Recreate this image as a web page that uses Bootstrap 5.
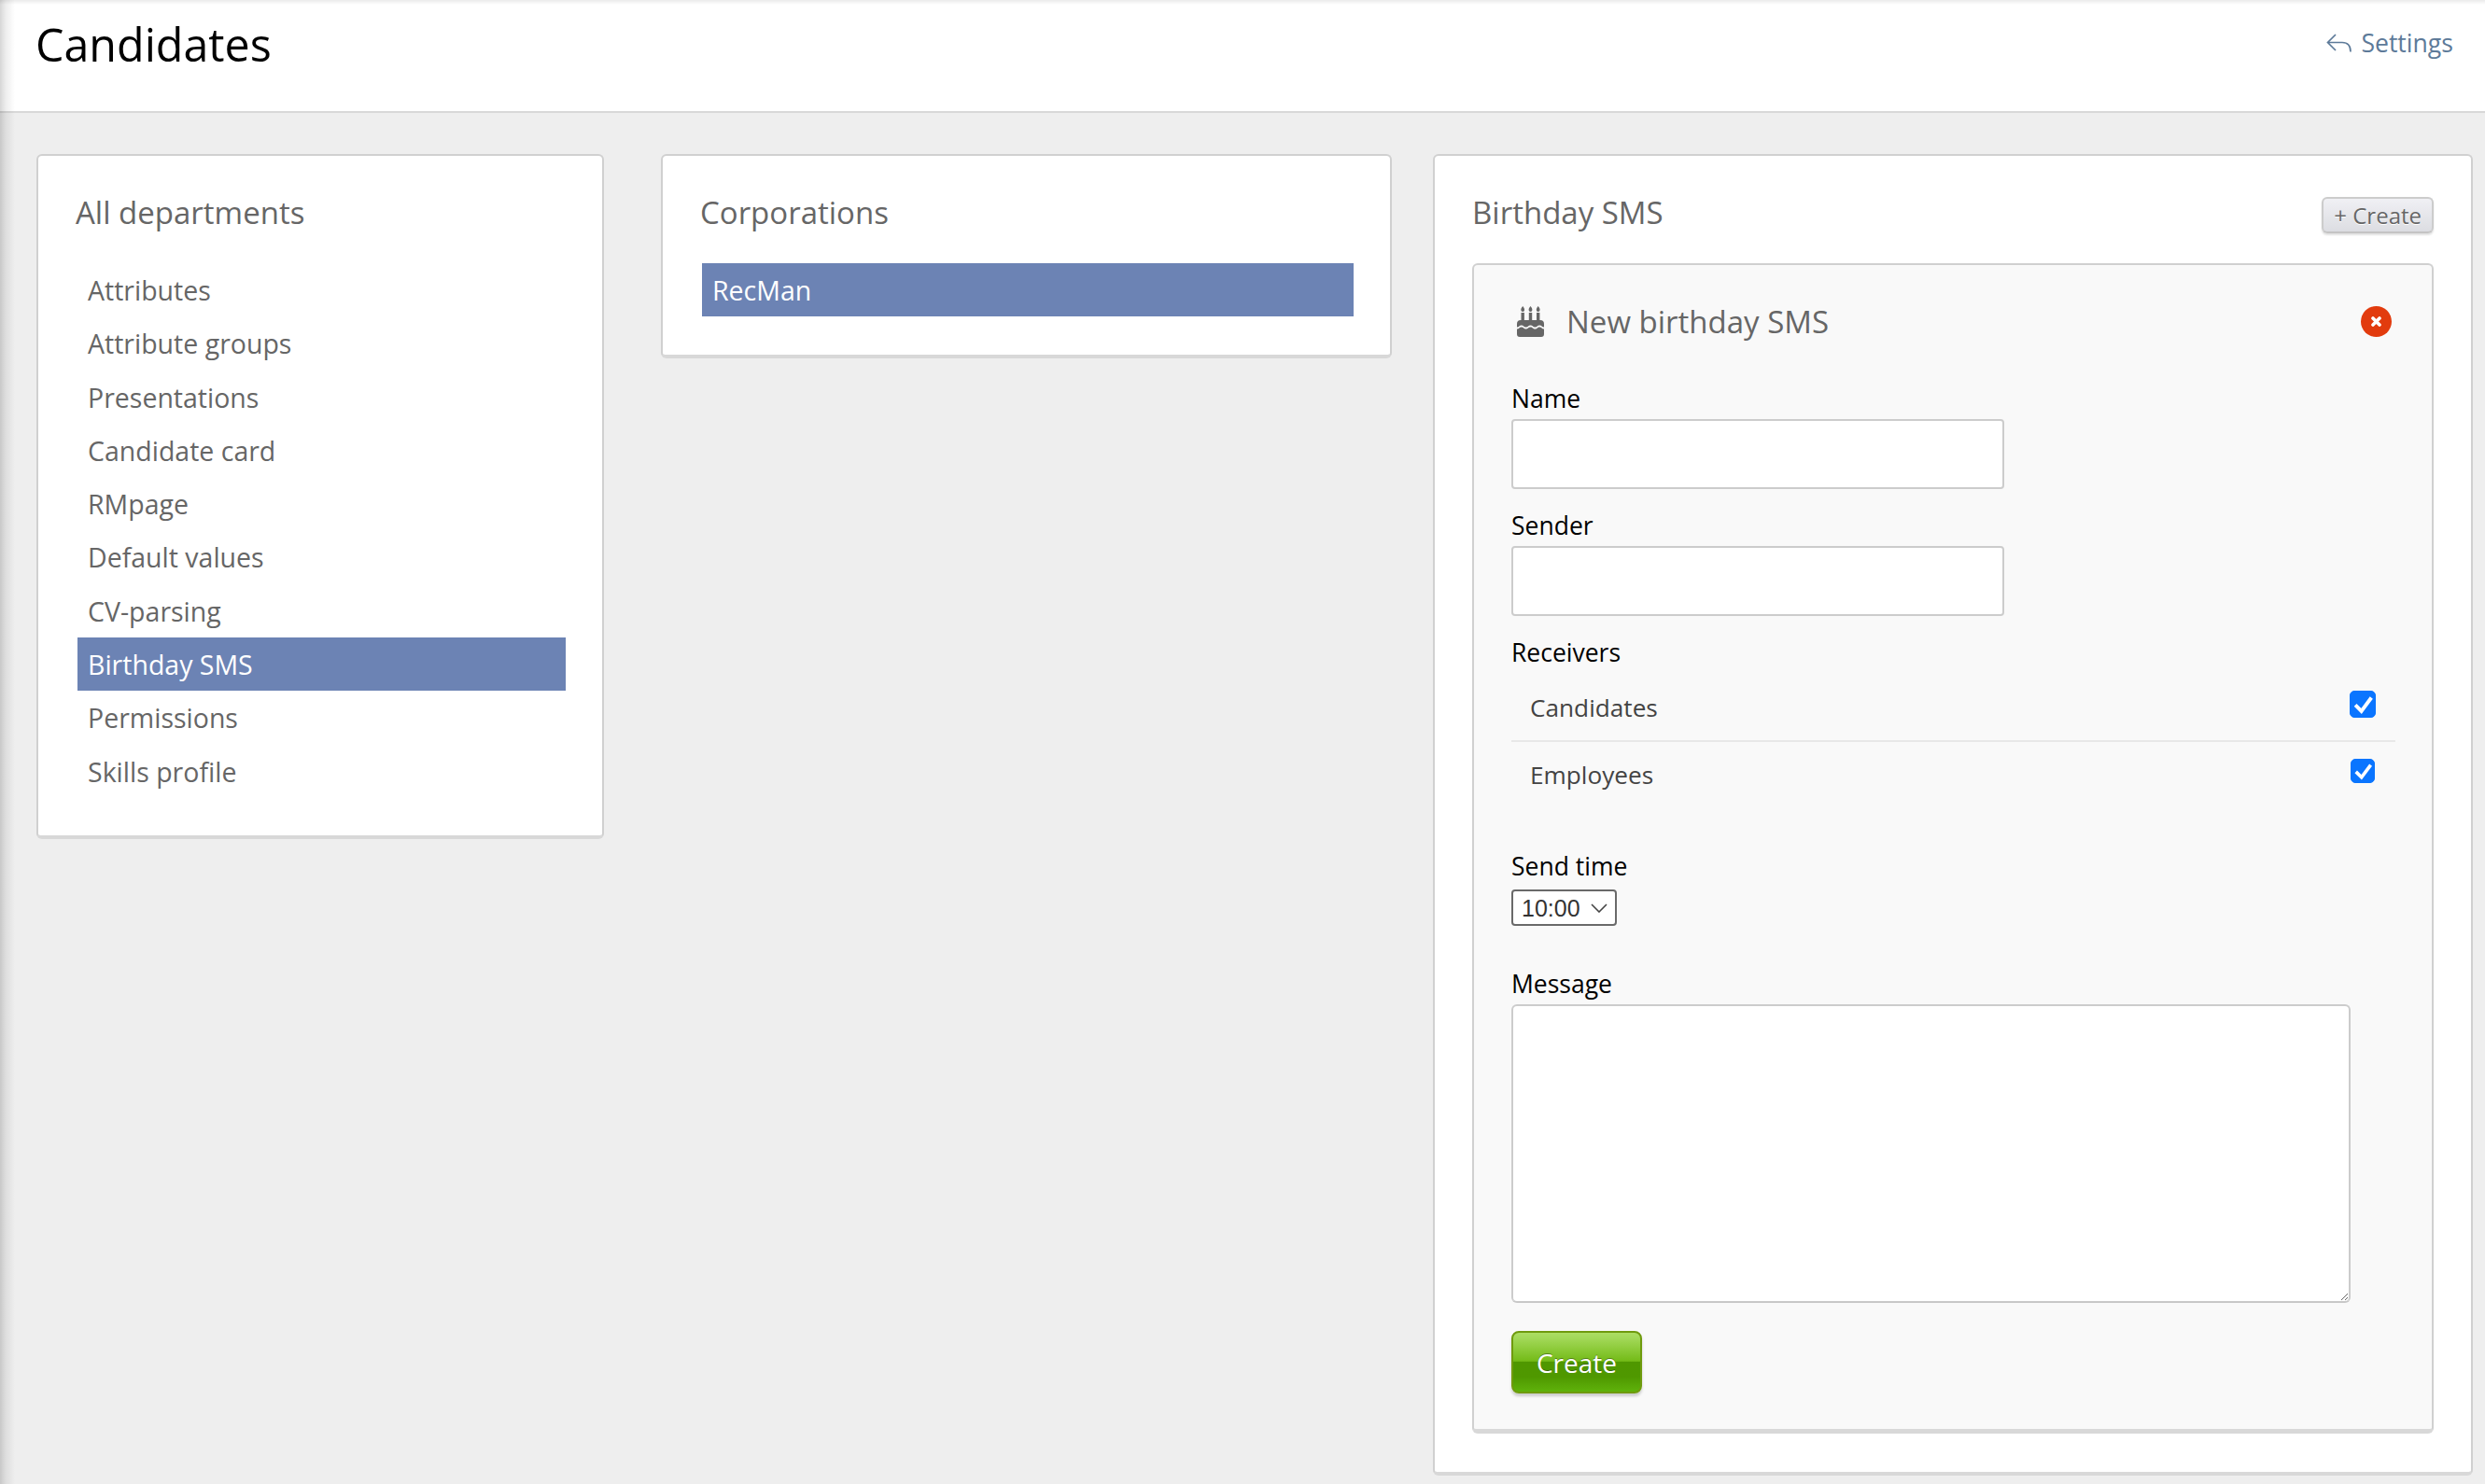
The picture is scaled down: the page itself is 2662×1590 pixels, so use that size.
<!DOCTYPE html>
<html lang="en">
<head>
<meta charset="utf-8">
<title>Candidates</title>
<link href="https://cdn.jsdelivr.net/npm/bootstrap@5.3.0/dist/css/bootstrap.min.css" rel="stylesheet">
<style>
html,body{height:100%}
body{font-family:"Open Sans","Noto Sans",sans-serif;font-size:28.5px;line-height:38px;color:#666;background:#eee;overflow:hidden}
.page-wrap{position:relative;height:1590px;background:#eee}
.page-wrap::before{content:"";position:absolute;inset:0;pointer-events:none;z-index:5;
 background:linear-gradient(to right,rgba(0,0,0,.16),rgba(0,0,0,.07) 6px,rgba(0,0,0,0) 16px),linear-gradient(to bottom,rgba(0,0,0,.08),rgba(0,0,0,0) 5px)}
.top-head{height:121px;background:#fff;border-bottom:2px solid #d8d8d8;padding:0 34px 0 38px}
.top-title{font-size:48.4px;line-height:66px;font-weight:400;color:#000;margin:14px 0 0}
.back-link{color:#5d7a99;text-decoration:none;font-size:26.6px;line-height:38px;margin-top:27px}
.back-link svg{width:27px;height:20px;margin-right:10px;margin-top:9px}
.cols{padding:44px 13px 0 39px}
.pane{background:#fff;border:2px solid #d0d0d0;border-bottom:4px solid #d8d8d8;border-radius:6px;padding:0;flex:none;color:#666}
.pane-a{width:608px;height:734px;margin-right:61px}
.pane-b{width:783px;height:219px;margin-right:44px}
.pane-c{width:1114px;height:1416px}
.pane-inner{padding:0 40px}
.pane-title{font-size:33px;line-height:46px;font-weight:400;margin:38px 0 0;color:#666}
.menu-list{list-style:none;margin:31px -1px 0 2px;padding:0}
.menu-list li{height:57.3px;line-height:58px;padding-left:11px;color:#666}
.menu-list li.on{background:#6c83b4;color:#fff}
.btn-small{background:linear-gradient(#f0f0f4,#dcdde2);border:2px solid #ccc;border-bottom-color:#c4c4c4;border-radius:6px;color:#666;font-size:24px;line-height:30px;padding:2px 11px 2px;height:39px;box-shadow:0 2px 2px rgba(0,0,0,.12);text-shadow:0 1px 0 #fff;margin-top:44px}
.sub-panel{background:#f9f9f9;border:2px solid #d0d0d0;border-bottom:5px solid #d8d8d8;border-radius:6px;height:1254px;margin:31px 0 0;padding:33px 41px 0 40px}
.sub-head{height:56px;margin-bottom:35px}
.sub-title{font-size:33px;line-height:56px;font-weight:400;color:#666;margin:0}
.cake{width:29px;height:33px;margin:-1px 24px 0 6px;fill:#666;flex:none}
.close-dot{width:33px;height:33px;margin-right:2px;margin-top:-1px}
.fld-label{color:#000;font-size:26.5px;line-height:38px;margin:0 0 3px;display:block}
.fld-input.form-control{width:528px;height:75px;border:2px solid #ccc;border-radius:4px;background:#fff;box-shadow:none;padding:0 12px;margin-bottom:20px}
.recv-label{margin-bottom:4px}
.recv-row{border-bottom:2px solid #e8e8e8;height:73px;width:947px;padding:15px 21px 0 20px;color:#444;font-size:26.2px}
.recv-row.last{border-bottom:0;height:72px;padding-top:14px}
.recv-row .form-check-input{width:28px;height:29px;margin:3px 0 0;background-color:#0a75ff;border-color:#0a75ff;border-radius:5px;flex:none;background-size:100% 100%;
 background-image:url("data:image/svg+xml,%3Csvg xmlns='http://www.w3.org/2000/svg' viewBox='0 0 28 28'%3E%3Cpath d='M5.5 15l7 7L24 6.5' fill='none' stroke='%23fff' stroke-width='4.2'/%3E%3C/svg%3E")}
.recv-row.last .form-check-input{width:26px;height:26px;margin:4px 1px 0 0}
.recv-row span{margin-top:2px}
.send-label{margin:42px 0 6px}
.time-select.form-select{width:113px;height:39px;border:2px solid #6a6a6a;border-radius:4px;background-color:#fff;color:#333;font-family:"Liberation Sans",Arial,sans-serif;font-size:25px;line-height:34px;padding:0 0 0 9px;box-shadow:none;background-position:right 8px center;background-size:18px 10px;
 background-image:url("data:image/svg+xml,%3Csvg xmlns='http://www.w3.org/2000/svg' viewBox='0 0 18 10'%3E%3Cpath d='M1 1l8 8 8-8' fill='none' stroke='%23444' stroke-width='1.6'/%3E%3C/svg%3E")}
.msg-label{margin:43px 0 3px}
.msg-box.form-control{width:899px;height:320px;border:2px solid #ccc;border-bottom-color:#c8c8c8;border-radius:6px;box-shadow:none;background:#fff}
.btn-go{width:140px;height:67px;border:2px solid #6f9b0e;border-radius:8px;color:#fff;font-size:28px;padding:0;line-height:60px;margin-top:30px;display:block;
 background:linear-gradient(#acdd63 0,#a4d95a 8%,#74bb18 48%,#4f9700 50%,#4f9800 75%,#5fb20b 100%);box-shadow:0 3px 3px rgba(0,0,0,.18);text-shadow:0 -1px 0 rgba(0,0,0,.35)}
</style>
</head>
<body>
<div class="page-wrap">
  <header class="top-head d-flex justify-content-between align-items-start">
    <h1 class="top-title">Candidates</h1>
    <a href="#" class="back-link d-flex align-items-start">
      <svg viewBox="0 0 27 20" fill="none" stroke="#5d7a99" stroke-width="1.7"><path d="M10 1 1.5 9.5 10 18M1.5 9.5H17c6 0 9 3 9 10"/></svg>Settings
    </a>
  </header>
  <main class="cols d-flex align-items-start">
    <section class="pane pane-a">
      <div class="pane-inner">
        <h2 class="pane-title">All departments</h2>
        <ul class="menu-list">
          <li>Attributes</li>
          <li>Attribute groups</li>
          <li>Presentations</li>
          <li>Candidate card</li>
          <li>RMpage</li>
          <li>Default values</li>
          <li>CV-parsing</li>
          <li class="on">Birthday SMS</li>
          <li>Permissions</li>
          <li>Skills profile</li>
        </ul>
      </div>
    </section>
    <section class="pane pane-b">
      <div class="pane-inner">
        <h2 class="pane-title">Corporations</h2>
        <ul class="menu-list">
          <li class="on">RecMan</li>
        </ul>
      </div>
    </section>
    <section class="pane pane-c">
      <div class="pane-inner">
        <div class="d-flex justify-content-between align-items-start">
          <h2 class="pane-title">Birthday SMS</h2>
          <button type="button" class="btn btn-small">+ Create</button>
        </div>
        <div class="sub-panel">
          <div class="sub-head d-flex justify-content-between align-items-center">
            <div class="d-flex align-items-center">
              <svg class="cake" viewBox="0 0 29 33"><path d="M6.2 0c1.5 1.8 1.9 3 1.9 4a1.9 1.9 0 0 1-3.8 0c0-1 .4-2.2 1.9-4zM14.5 0c1.5 1.8 1.9 3 1.9 4a1.9 1.9 0 0 1-3.8 0c0-1 .4-2.2 1.9-4zM22.7 0c1.5 1.8 1.9 3 1.9 4a1.9 1.9 0 0 1-3.8 0c0-1 .4-2.2 1.9-4zM4.5 7h3.4v8H4.5zM12.8 7h3.4v8h-3.4zM21 7h3.4v8H21zM0 22.5V19a4 4 0 0 1 4-4h21a4 4 0 0 1 4 4v3.5c-2.4 0-2.4-2-4.8-2s-2.4 2-4.8 2-2.4-2-4.9-2-2.4 2-4.9 2-2.4-2-4.8-2-2.4 2-4.8 2zM0 24.5c2.4 0 2.4-2 4.8-2s2.4 2 4.8 2 2.4-2 4.9-2 2.4 2 4.9 2 2.4-2 4.8-2 2.4 2 4.8 2V30a3 3 0 0 1-3 3H3a3 3 0 0 1-3-3z"/></svg>
              <h3 class="sub-title">New birthday SMS</h3>
            </div>
            <svg class="close-dot" viewBox="0 0 33 33"><circle cx="16.5" cy="16.5" r="16.5" fill="#e23b0e"/><path d="M13 13l7 7m0-7l-7 7" stroke="#fff" stroke-width="3.6" stroke-linecap="round"/></svg>
          </div>
          <form>
            <label class="fld-label" for="f-name">Name</label>
            <input id="f-name" type="text" class="form-control fld-input">
            <label class="fld-label" for="f-sender">Sender</label>
            <input id="f-sender" type="text" class="form-control fld-input">
            <label class="fld-label recv-label">Receivers</label>
            <div class="recv-row d-flex justify-content-between align-items-start"><span>Candidates</span><input class="form-check-input" type="checkbox" checked aria-label="Candidates"></div>
            <div class="recv-row last d-flex justify-content-between align-items-start"><span>Employees</span><input class="form-check-input" type="checkbox" checked aria-label="Employees"></div>
            <label class="fld-label send-label" for="f-time">Send time</label>
            <select id="f-time" class="form-select time-select"><option>10:00</option></select>
            <label class="fld-label msg-label" for="f-msg">Message</label>
            <textarea id="f-msg" class="form-control msg-box"></textarea>
            <button type="button" class="btn btn-go">Create</button>
          </form>
        </div>
      </div>
    </section>
  </main>
</div>
<script src="https://cdn.jsdelivr.net/npm/bootstrap@5.3.0/dist/js/bootstrap.bundle.min.js"></script>
</body>
</html>
